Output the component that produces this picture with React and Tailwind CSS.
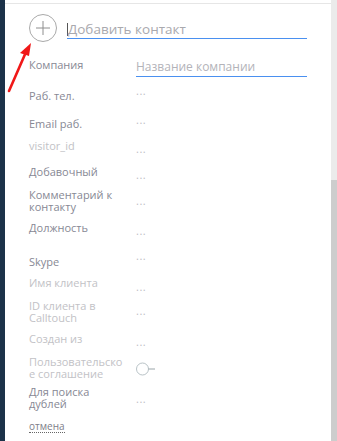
import React from "react";

/* Contact fields below the name input */
const rows = [
  { label: ["Раб. тел."], tone: "dark", h: "h-[29px]", lpt: "pt-[5px]", vpt: "pt-0" },
  { label: ["Email раб."], tone: "dark", h: "h-[26px]", lpt: "pt-[4px]", vpt: "pt-0" },
  { label: ["visitor_id"], tone: "light", h: "h-[26px]", lpt: "pt-0", vpt: "pt-[3px]" },
  { label: ["Добавочный"], tone: "dark", h: "h-[23px]", lpt: "pt-0", vpt: "pt-[3px]" },
  { label: ["Комментарий к", "контакту"], tone: "dark", h: "h-[33px]", lpt: "pt-0", vpt: "pt-[6px]" },
  { label: ["Должность"], tone: "dark", h: "h-[28px]", lpt: "pt-0", vpt: "pt-[3px]" },
  { label: ["Skype"], tone: "dark", h: "h-[27px]", lpt: "pt-[6px]", vpt: "pt-0" },
  { label: ["Имя клиента"], tone: "light", h: "h-[23px]", lpt: "pt-0", vpt: "pt-[4px]" },
  { label: ["ID клиента в", "Calltouch"], tone: "light", h: "h-[33px]", lpt: "pt-0", vpt: "pt-[5px]" },
  { label: ["Создан из"], tone: "light", h: "h-[23px]", lpt: "pt-0", vpt: "pt-[3px]" },
  { label: ["Пользовательско", "е соглашение"], tone: "light", h: "h-[30px]", lpt: "pt-0", vpt: "pt-[6px]", toggle: true },
  { label: ["Для поиска", "дублей"], tone: "dark", h: "h-[35px]", lpt: "pt-0", vpt: "pt-[7px]" },
];

function Toggle() {
  return (
    <svg width="20" height="14" viewBox="0 0 20 14" className="block">
      <circle cx="6.5" cy="7" r="6" fill="none" stroke="#b9c3c7" strokeWidth="1" />
      <line x1="12.5" y1="7" x2="19" y2="7" stroke="#9aa5a9" strokeWidth="1" />
    </svg>
  );
}

function Row({ row }) {
  return (
    <div className={`flex ${row.h}`}>
      <div
        className={`w-[107px] shrink-0 text-[11px] leading-[12px] ${row.lpt} ${
          row.tone === "dark" ? "text-[#878894]" : "text-[#c2c2c6]"
        }`}
      >
        {row.label.map((l) => (
          <div key={l}>{l}</div>
        ))}
      </div>
      <div className={row.vpt}>
        {row.toggle ? (
          <Toggle />
        ) : (
          <span className="block text-[11px] leading-[12px] tracking-[0.5px] text-[#bdbdc4]">...</span>
        )}
      </div>
    </div>
  );
}

export default function App() {
  return (
    <div
      className="relative flex h-[441px] w-[337px] overflow-hidden bg-white"
      style={{ fontFamily: '"Open Sans", "Noto Sans", sans-serif' }}
    >
      {/* dark sidebar edge */}
      <div className="w-[5px] shrink-0 bg-[#1c3249]" />

      {/* form panel */}
      <div className="flex-1 pt-[3px]">
        <div className="border-t border-[#e6e6e6] pl-[24px] pr-[24px]">
          {/* header: add button + name */}
          <div className="mt-[10px] flex items-start gap-[10px]">
            <button className="flex h-[28px] w-[28px] shrink-0 items-center justify-center rounded-full border border-[#a9a9a9]">
              <svg width="16" height="16" viewBox="0 0 16 16">
                <path d="M8 1v14M1 8h14" stroke="#8e8e8e" strokeWidth="1" />
              </svg>
            </button>
            <div className="mt-[6px] flex h-[19px] flex-1 items-center border-b border-[#4a90f0]">
              <span className="h-[13px] w-px bg-[#555]" />
              <span className="text-[13.5px] leading-[16px] text-[#a9a9ae]">Добавить контакт</span>
            </div>
          </div>

          {/* company */}
          <div className="mt-[15px] flex h-[28px]">
            <div className="w-[107px] shrink-0 pt-[2px] text-[11px] leading-[12px] text-[#878894]">Компания</div>
            <div className="flex h-[20px] flex-1 items-center border-b border-[#4a90f0]">
              <span className="text-[12px] leading-[14px] text-[#b3b3b9]">Название компании</span>
            </div>
          </div>

          {rows.map((r) => (
            <Row key={r.label.join(" ")} row={r} />
          ))}

          <a className="block w-fit border-b border-dotted border-[#666] text-[10px] leading-[11px] text-[#7d7d88]">
            отмена
          </a>
        </div>
      </div>

      {/* scrollbar */}
      <div className="flex w-[6px] shrink-0 flex-col bg-[#ebebeb]">
        <div className="h-[180px]" />
        <div className="flex-1 bg-[#cdcdcd]" />
      </div>

      {/* red annotation arrow */}
      <svg className="pointer-events-none absolute left-0 top-0" width="60" height="100" viewBox="0 0 60 100">
        <line x1="9" y1="91" x2="26" y2="52" stroke="#f01818" strokeWidth="2.6" strokeLinecap="round" />
        <polygon points="31,43 20,53 29,56" fill="#f01818" />
      </svg>
    </div>
  );
}
